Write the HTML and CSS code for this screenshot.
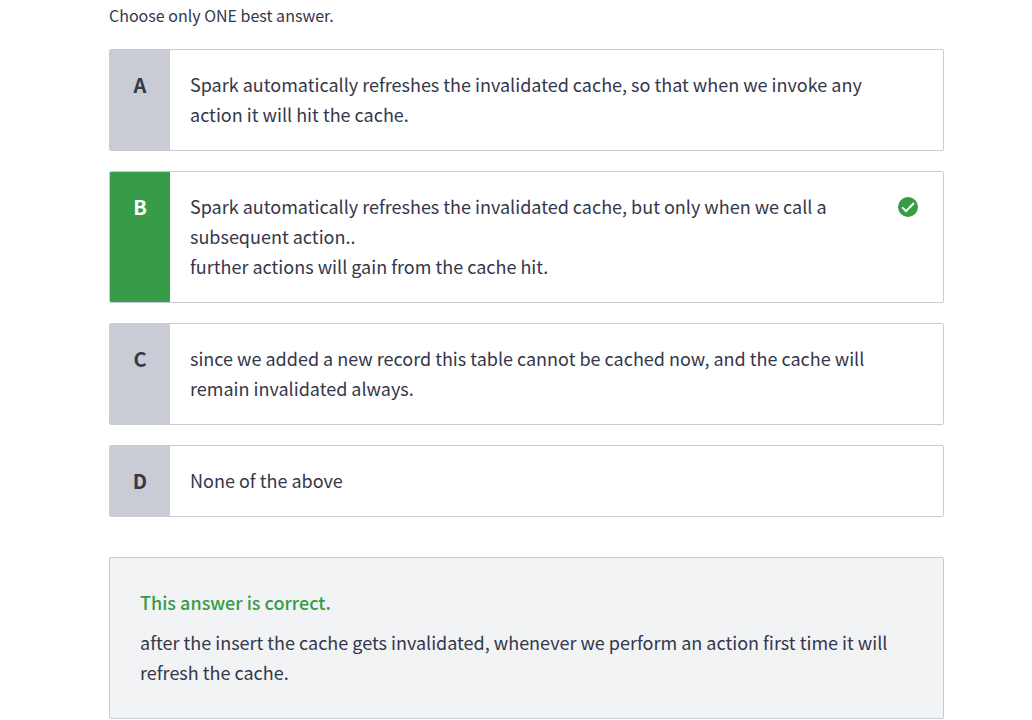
FILE: index.html
```html
<!DOCTYPE html>
<html lang="en">
<head>
<meta charset="utf-8">
<meta name="viewport" content="width=device-width, initial-scale=1">
<title>Question</title>
<link rel="stylesheet" href="styles.css">
</head>
<body>
<main class="question">
  <p class="hint">Choose only ONE best answer.</p>
  <ol class="options">
    <li class="option">
      <span class="letter">A</span>
      <p class="text">Spark automatically refreshes the invalidated cache, so that when we invoke any action it will hit the cache.</p>
    </li>
    <li class="option option-correct">
      <span class="letter">B</span>
      <p class="text">Spark automatically refreshes the invalidated cache, but only when we call a subsequent action..<br>further actions will gain from the cache hit.</p>
      <svg class="check" viewBox="0 0 20 20" role="img" aria-label="Correct">
        <circle cx="10" cy="10" r="10" fill="#389b48"/>
        <path d="M4.2 10.4l3.8 3.8 8-8.2" fill="none" stroke="#fff" stroke-width="2"/>
      </svg>
    </li>
    <li class="option">
      <span class="letter">C</span>
      <p class="text">since we added a new record this table cannot be cached now, and the cache will remain invalidated always.</p>
    </li>
    <li class="option">
      <span class="letter">D</span>
      <p class="text">None of the above</p>
    </li>
  </ol>
  <section class="feedback">
    <h2 class="feedback-title">This answer is correct.</h2>
    <p class="feedback-text">after the insert the cache gets invalidated, whenever we perform an action first time it will refresh the cache.</p>
  </section>
</main>
</body>
</html>
```
FILE: styles.css
```css
* {
  box-sizing: border-box;
}

body {
  margin: 0;
  background: #fff;
  color: #35374a;
  font-family: "Noto Sans CJK SC", "Noto Sans", sans-serif;
  font-size: 18px;
  line-height: 30px;
}

p,
h2,
ol {
  margin: 0;
  padding: 0;
}

.question {
  margin: 0 88px 0 109px;
  padding-top: 3px;
}

.hint {
  margin-bottom: 22px;
  font-size: 16px;
  line-height: 24px;
}

.options {
  display: flex;
  flex-direction: column;
  gap: 20px;
  list-style: none;
}

.option {
  display: flex;
  border: 1px solid #c9ccd5;
  border-radius: 2px;
  overflow: hidden;
}

.letter {
  flex: none;
  width: 60px;
  padding: 20px 0;
  background: #c9ccd5;
  font-size: 20px;
  font-weight: 700;
  text-align: center;
}

.text {
  flex: 1;
  padding: 19px 72px 21px 20px;
}

.option-correct .letter {
  background: #389b48;
  color: #fff;
}

.option-correct .text {
  padding-right: 48px;
}

.check {
  flex: none;
  width: 20px;
  height: 20px;
  margin: 25px 25px 0 0;
}

.feedback {
  margin-top: 40px;
  padding: 29px 30px 31px;
  border: 1px solid #c9ccd5;
  border-radius: 2px;
  background: #f1f3f4;
}

.feedback-title {
  margin-bottom: 10px;
  color: #389b48;
  font-size: 18px;
  font-weight: 500;
}
```
